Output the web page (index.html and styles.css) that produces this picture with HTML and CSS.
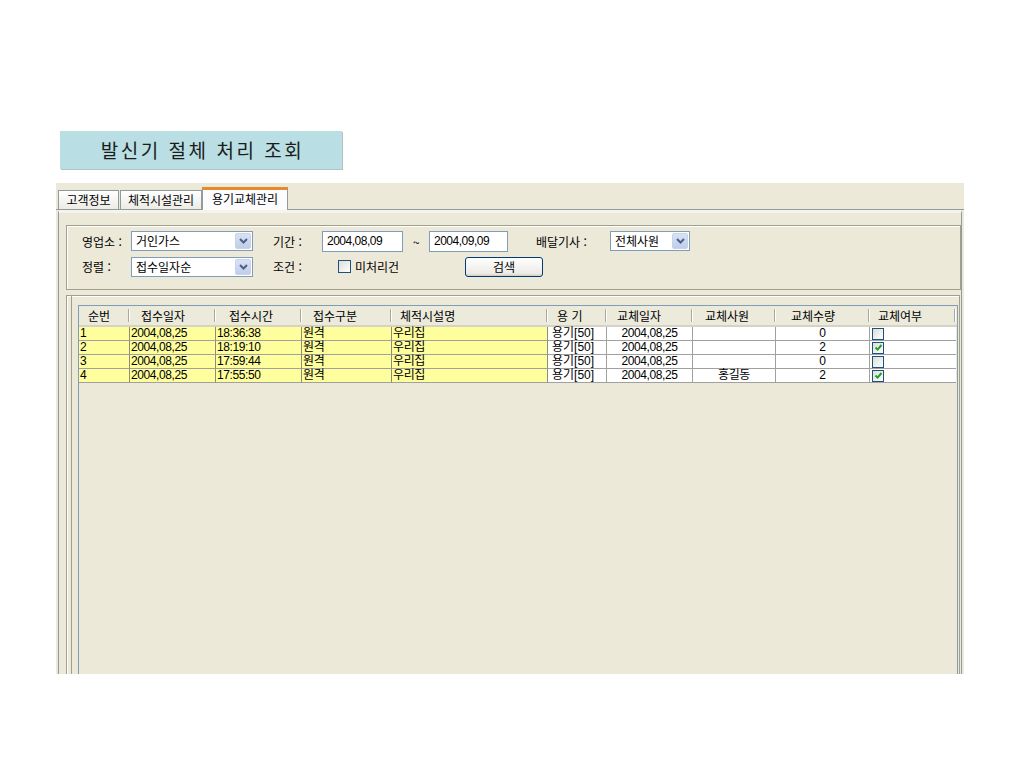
FILE: index.html
```html
<!DOCTYPE html>
<html lang="ko">
<head>
<meta charset="utf-8">
<title>발신기 절체 처리 조회</title>
<link rel="stylesheet" href="styles.css">
</head>
<body>
<div class="title">발신기 절체 처리 조회</div>

<div class="panel">
  <div class="tabs">
    <div class="tab t1">고객정보</div>
    <div class="tab t2">체적시설관리</div>
    <div class="tab t3 active">용기교체관리</div>
  </div>
  <div class="page">
    <div class="group g1">
      <div class="row">
        <span class="lbl w49">영업소 :</span>
        <div class="combo cw1"><span class="val">거인가스</span><span class="drop"><svg width="9" height="6" viewBox="0 0 9 6"><path d="M1 1 L4.5 4.5 L8 1" fill="none" stroke="#4d6185" stroke-width="2"/></svg></span></div>
        <span class="lbl w49 ml20">기간 :</span>
        <div class="input iw1">2004,08,09</div>
        <span class="tilde">~</span>
        <div class="input iw2">2004,09,09</div>
        <span class="lbl w74 ml28">배달기사 :</span>
        <div class="combo cw2"><span class="val">전체사원</span><span class="drop"><svg width="9" height="6" viewBox="0 0 9 6"><path d="M1 1 L4.5 4.5 L8 1" fill="none" stroke="#4d6185" stroke-width="2"/></svg></span></div>
      </div>
      <div class="row r2">
        <span class="lbl w49">정렬 :</span>
        <div class="combo cw1"><span class="val">접수일자순</span><span class="drop"><svg width="9" height="6" viewBox="0 0 9 6"><path d="M1 1 L4.5 4.5 L8 1" fill="none" stroke="#4d6185" stroke-width="2"/></svg></span></div>
        <span class="lbl w65 ml20">조건 :</span>
        <span class="cbox big"></span>
        <span class="lbl w48 ml4">미처리건</span>
        <div class="btn">검색</div>
      </div>
    </div>

    <div class="group g2">
      <div class="inner">
        <div class="list">
          <div class="grid head">
            <div class="hc">순번</div>
            <div class="hc">접수일자</div>
            <div class="hc">접수시간</div>
            <div class="hc">접수구분</div>
            <div class="hc">체적시설명</div>
            <div class="hc">용 기</div>
            <div class="hc">교체일자</div>
            <div class="hc">교체사원</div>
            <div class="hc">교체수량</div>
            <div class="hc">교체여부</div>
          </div>

          <div class="grid drow">
            <div class="c y">1</div><div class="c y">2004,08,25</div><div class="c y">18:36:38</div><div class="c y">원격</div><div class="c y">우리집</div>
            <div class="c l4">용기[50]</div><div class="c ctr">2004,08,25</div><div class="c ctr"></div><div class="c ctr">0</div>
            <div class="c chk"><span class="cbox"></span></div>
          </div>
          <div class="grid drow">
            <div class="c y">2</div><div class="c y">2004,08,25</div><div class="c y">18:19:10</div><div class="c y">원격</div><div class="c y">우리집</div>
            <div class="c l4">용기[50]</div><div class="c ctr">2004,08,25</div><div class="c ctr"></div><div class="c ctr">2</div>
            <div class="c chk"><span class="cbox on"><svg width="9" height="9" viewBox="0 0 9 9"><path d="M1.5 4.5 L3.6 6.6 L7.5 2" fill="none" stroke="#21a121" stroke-width="2"/></svg></span></div>
          </div>
          <div class="grid drow">
            <div class="c y">3</div><div class="c y">2004,08,25</div><div class="c y">17:59:44</div><div class="c y">원격</div><div class="c y">우리집</div>
            <div class="c l4">용기[50]</div><div class="c ctr">2004,08,25</div><div class="c ctr"></div><div class="c ctr">0</div>
            <div class="c chk"><span class="cbox"></span></div>
          </div>
          <div class="grid drow">
            <div class="c y">4</div><div class="c y">2004,08,25</div><div class="c y">17:55:50</div><div class="c y">원격</div><div class="c y">우리집</div>
            <div class="c l4">용기[50]</div><div class="c ctr">2004,08,25</div><div class="c ctr">홍길동</div><div class="c ctr">2</div>
            <div class="c chk"><span class="cbox on"><svg width="9" height="9" viewBox="0 0 9 9"><path d="M1.5 4.5 L3.6 6.6 L7.5 2" fill="none" stroke="#21a121" stroke-width="2"/></svg></span></div>
          </div>
        </div>
      </div>
    </div>
  </div>
</div>
</body>
</html>
```

FILE: styles.css
```css
* { box-sizing: border-box; }

body {
  margin: 0;
  background: #ffffff;
  font-family: "Noto Sans CJK KR", "Noto Sans", sans-serif;
  font-size: 12px;
  color: #000;
}

.title {
  margin: 131px 0 0 60px;
  width: 282px;
  height: 38px;
  background: #b9dee3;
  box-shadow: 1px 1px 0 #b4c2c4;
  color: #1c1c1c;
  font-size: 19px;
  letter-spacing: 2.5px;
  line-height: 38px;
  text-align: center;
  padding-left: 3px;
}

.panel {
  margin: 14px 0 0 56px;
  width: 908px;
  height: 491px;
  background: #ece9d8;
  overflow: hidden;
}

.tabs {
  display: flex;
  align-items: flex-end;
  height: 27px;
  padding-left: 2px;
  border-bottom: 1px solid #919b9c;
}

.tab {
  height: 19px;
  line-height: 17px;
  border: 1px solid #919b9c;
  border-bottom: none;
  background: linear-gradient(#ffffff, #ecebe5);
  text-align: center;
  white-space: nowrap;
}
.t1 { width: 61px; }
.t2 { width: 82px; margin-left: 1px; }
.t3 { width: 86px; }
.tab.active {
  height: 23px;
  margin-bottom: -1px;
  border-top: 3px solid #e68b2c;
  background: #fcfcfe;
  line-height: 17px;
}

.page {
  margin: 0 2px;
  height: 470px;
  border-left: 1px solid #919b9c;
  border-right: 1px solid #919b9c;
  border-top: 3px solid #f4f3ee;
  padding-top: 12px;
}

.group {
  border: 1px solid #a29f8f;
  box-shadow: inset 1px 1px 0 #ffffff;
}
.g1 {
  margin-left: 7px;
  width: 895px;
  height: 65px;
  padding: 5px 0 0 15px;
}
.g2 {
  margin-top: 5px;
  margin-left: 7px;
  width: 894px;
  height: 400px;
  padding: 0 0 0 4px;
}
.g2 .inner {
  height: 100%;
  border-left: 1px solid #a29f8f;
  padding: 9px 2px 0 6px;
}

.row {
  display: flex;
  align-items: center;
  height: 20px;
}
.row.r2 { margin-top: 5px; height: 21px; }

.lbl { white-space: nowrap; display: inline-block; }
.w49 { width: 49px; }
.w65 { width: 65px; }
.w74 { width: 74px; }
.w48 { width: 48px; }
.ml20 { margin-left: 20px; }
.ml28 { margin-left: 28px; }
.ml4 { margin-left: 4px; }

.combo {
  display: flex;
  align-items: center;
  justify-content: space-between;
  height: 20px;
  border: 1px solid #7f9db9;
  background: #fff;
  padding: 1px;
}
.cw1 { width: 122px; }
.cw2 { width: 80px; }
.combo .val { padding-left: 3px; line-height: 16px; }
.drop {
  width: 16px;
  height: 16px;
  display: flex;
  align-items: center;
  justify-content: center;
  background: linear-gradient(#d9e2f4, #bfcdea);
  border: 1px solid #c8d3ea;
  border-radius: 2px;
}

.input {
  height: 21px;
  border: 1px solid #7f9db9;
  background: #fff;
  padding-left: 4px;
  line-height: 19px;
  font-family: "Liberation Sans", "Noto Sans CJK KR", sans-serif;
  letter-spacing: -0.5px;
}
.iw1 { width: 81px; }
.iw2 { width: 79px; }
.tilde { margin-left: 10px; width: 16px; }

.cbox {
  display: inline-flex;
  align-items: center;
  justify-content: center;
  width: 12px;
  height: 12px;
  border: 1px solid #1c5180;
  background: linear-gradient(135deg, #dcdcd7, #ffffff);
}
.cbox.big { width: 13px; height: 13px; }

.btn {
  margin-left: 62px;
  width: 78px;
  height: 20px;
  border: 1px solid #003c74;
  border-radius: 3px;
  background: linear-gradient(#ffffff, #ecebe6 85%, #d6d0c5);
  box-shadow: inset 0 -1px 0 #d6d0c5;
  text-align: center;
  line-height: 18px;
}

.list {
  width: 880px;
  height: 400px;
  border: 1px solid #7f9db9;
  background: #ece9d8;
}

.grid {
  display: grid;
  grid-template-columns: 51px 86px 86px 90px 156px 59px 86px 83px 94px 86px;
}

.head {
  height: 21px;
  background: #ebeadb;
  border-bottom: 2px solid #d6d3c6;
}
.hc {
  position: relative;
  padding-top: 2px;
  line-height: 16px;
  white-space: nowrap;
  color: #000;
}
.hc::after {
  content: "";
  position: absolute;
  right: 1px;
  top: 3px;
  bottom: 3px;
  width: 1px;
  background: #aca899;
  box-shadow: 1px 0 0 #ffffff;
}
.hc:nth-child(1) { padding-left: 9px; }
.hc:nth-child(2) { padding-left: 11px; }
.hc:nth-child(3) { padding-left: 13px; }
.hc:nth-child(4) { padding-left: 11px; }
.hc:nth-child(5) { padding-left: 8px; }
.hc:nth-child(6) { padding-left: 9px; }
.hc:nth-child(7) { padding-left: 10px; }
.hc:nth-child(8) { padding-left: 12px; }
.hc:nth-child(9) { padding-left: 15px; }
.hc:nth-child(10) { padding-left: 8px; }

.drow { height: 14px; }
.c {
  height: 14px;
  font-family: "Liberation Sans", "Noto Sans CJK KR", sans-serif;
  font-size: 12px;
  line-height: 13px;
  border-right: 1px solid #a0a0a0;
  border-bottom: 1px solid #a0a0a0;
  background: #ffffff;
  padding-left: 1px;
  white-space: nowrap;
  letter-spacing: -0.4px;
}
.c.y { background: #fffe9c; border-right-color: #8c8c7a; }
.c.l4 { padding-left: 4px; letter-spacing: 0; }
.c.ctr { text-align: center; padding-left: 0; }
.c.chk { padding-left: 2px; display: flex; align-items: center; border-right: none; }
.c.chk .cbox { width: 12px; height: 12px; }
```
